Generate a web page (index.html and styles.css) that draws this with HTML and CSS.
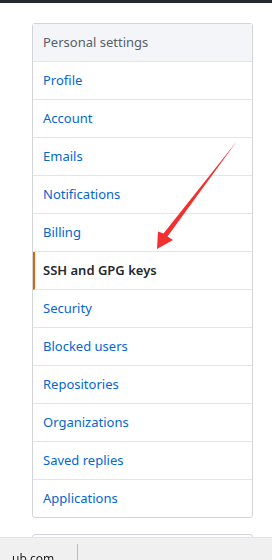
FILE: index.html
```html
<!DOCTYPE html>
<html lang="en">
<head>
    <meta charset="UTF-8">
    <meta name="viewport" content="width=device-width, initial-scale=1.0">
    <title>Settings</title>
    <link rel="stylesheet" href="styles.css">
</head>
<body>
    <div class="topbar"></div>

    <!-- Settings menu -->
    <nav class="menu">
        <h3 class="menu-heading">Personal settings</h3>
        <a href="#" class="menu-item">Profile</a>
        <a href="#" class="menu-item">Account</a>
        <a href="#" class="menu-item">Emails</a>
        <a href="#" class="menu-item">Notifications</a>
        <a href="#" class="menu-item">Billing</a>
        <a href="#" class="menu-item selected">SSH and GPG keys</a>
        <a href="#" class="menu-item">Security</a>
        <a href="#" class="menu-item">Blocked users</a>
        <a href="#" class="menu-item">Repositories</a>
        <a href="#" class="menu-item">Organizations</a>
        <a href="#" class="menu-item">Saved replies</a>
        <a href="#" class="menu-item">Applications</a>
    </nav>

    <div class="menu menu-next"></div>

    <!-- Red annotation arrow -->
    <svg class="arrow" width="272" height="560" viewBox="0 0 272 560">
        <path d="M237 141 L167.5 236.5 L173 240 L157 249 L158 231.5 L163.5 233.5 Z" fill="#f2302f"/>
    </svg>

    <div class="statusbar">
        <span class="status-text">ub.com</span>
        <span class="status-sep"></span>
    </div>
</body>
</html>
```

FILE: styles.css
```css
* {
    margin: 0;
    padding: 0;
    box-sizing: border-box;
}

body {
    background: #fff;
    font-family: 'Noto Sans', 'Open Sans', sans-serif;
    font-size: 13px;
    height: 560px;
    overflow: hidden;
}

.topbar {
    height: 3px;
    background: #24292e;
}

/* Menu card */
.menu {
    margin: 20px 0 0 32px;
    width: 221px;
    border: 1px solid #d1d5da;
    border-radius: 3px;
    background: #fff;
}

.menu-heading {
    height: 38px;
    padding: 0 10px;
    line-height: 37px;
    font-size: 13px;
    font-weight: 400;
    color: #586069;
    background: #f3f5f8;
    border-bottom: 1px solid #e1e4e8;
}

.menu-item {
    display: block;
    height: 38px;
    padding: 0 10px;
    line-height: 37px;
    color: #0366d6;
    text-decoration: none;
    border-bottom: 1px solid #e1e4e8;
}

.menu-item:last-child {
    border-bottom: none;
    height: 37px;
}

.menu-item.selected {
    color: #24292e;
    font-weight: 600;
    border-left: 2px solid #e36209;
    padding-left: 8px;
}

.menu-next {
    margin-top: 16px;
    height: 30px;
}

.arrow {
    position: absolute;
    top: 0;
    left: 0;
    pointer-events: none;
}

/* Browser status bar */
.statusbar {
    position: fixed;
    left: 0;
    right: 0;
    bottom: 0;
    height: 23px;
    background: #f0f0f0;
    border-top: 1px solid #e3e3e3;
    display: flex;
    align-items: flex-start;
}

.status-text {
    width: 77px;
    padding: 14px 0 0 12px;
    font-size: 12px;
    line-height: 14px;
    color: #222;
}

.status-sep {
    margin-top: 6px;
    width: 1px;
    height: 20px;
    background: #bbb;
}
```
